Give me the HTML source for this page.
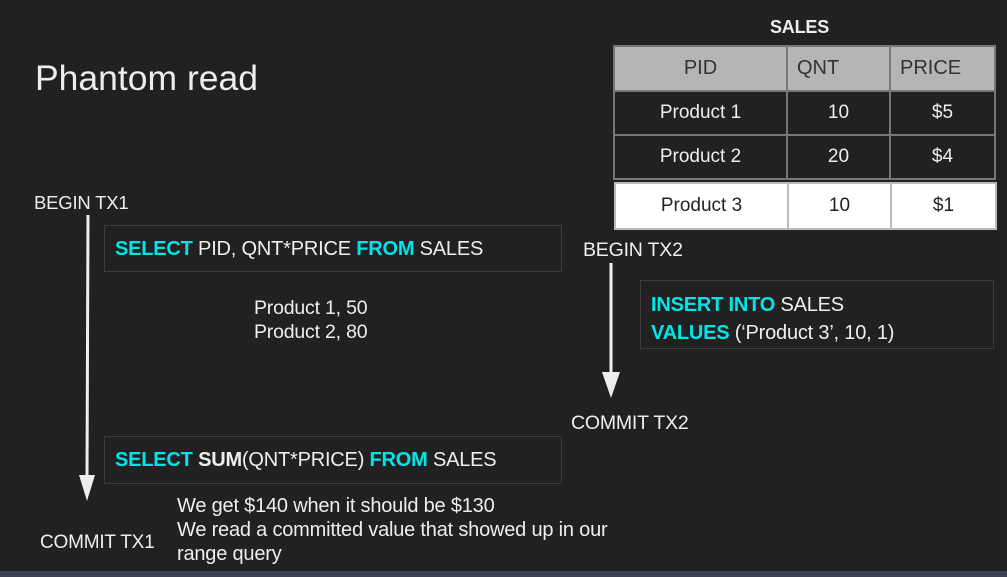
<!DOCTYPE html>
<html><head><style>
body{margin:0;width:1007px;height:577px;background:#212121;overflow:hidden;position:relative;font-family:"Liberation Sans",sans-serif;color:#eee}
.t{position:absolute;white-space:nowrap;font-size:20px;letter-spacing:-0.2px}
.c{color:#00e5e8;font-weight:bold}
.box{position:absolute;border:1px solid #3c3c3c}
table{position:absolute;border-collapse:collapse;font-size:19px;table-layout:fixed}
td{border:2px solid #777;text-align:center;padding:0}
</style></head><body>
<div class="t" style="left:35px;top:58px;font-size:35.5px;letter-spacing:0">Phantom read</div>
<div class="t" style="left:770px;top:17px;font-weight:bold;font-size:18px">SALES</div>
<table style="left:613px;top:45px;width:381px">
<colgroup><col style="width:173px"><col style="width:103px"><col style="width:105px"></colgroup>
<tr style="height:45px;background:#b5b5b5;color:#333;font-size:20px"><td>PID</td><td style="text-align:left;padding-left:9px">QNT</td><td style="text-align:left;padding-left:9px">PRICE</td></tr>
<tr style="height:44px"><td>Product 1</td><td>10</td><td>$5</td></tr>
<tr style="height:44px"><td>Product 2</td><td>20</td><td>$4</td></tr>
</table>
<table style="left:614px;top:182px;width:381px;background:#fff;color:#222">
<colgroup><col style="width:173px"><col style="width:103px"><col style="width:105px"></colgroup>
<tr style="height:46px"><td style="border-color:#bbb">Product 3</td><td style="border-color:#bbb">10</td><td style="border-color:#bbb">$1</td></tr>
</table>
<div class="t" style="left:34px;top:192px;font-size:18.5px">BEGIN TX1</div>
<div class="box" style="left:104px;top:225px;width:456px;height:45px"></div>
<div class="t" style="left:115px;top:238px"><span class="c">SELECT</span> PID, QNT*PRICE <span class="c">FROM</span> SALES</div>
<div class="t" style="left:254px;top:296px;line-height:24px;font-size:19.5px">Product 1, 50<br>Product 2, 80</div>
<div class="t" style="left:583px;top:239px;font-size:19.5px">BEGIN TX2</div>
<div class="box" style="left:640px;top:280px;width:352px;height:67px"></div>
<div class="t" style="left:651px;top:291px;line-height:28px;font-size:20px"><span class="c">INSERT INTO</span> SALES<br><span class="c">VALUES</span> (‘Product 3’, 10, 1)</div>
<div class="t" style="left:571px;top:412px;font-size:19.5px">COMMIT TX2</div>
<div class="box" style="left:104px;top:436px;width:456px;height:46px"></div>
<div class="t" style="left:115px;top:449px"><span class="c">SELECT</span> <b>SUM</b>(QNT*PRICE) <span class="c">FROM</span> SALES</div>
<div class="t" style="left:177px;top:494px;line-height:24px;font-size:20px">We get $140 when it should be $130<br>We read a committed value that showed up in our<br>range query</div>
<div class="t" style="left:40px;top:532px;font-size:19px">COMMIT TX1</div>
<svg style="position:absolute;left:0;top:0" width="1007" height="577">
<line x1="88" y1="215" x2="87" y2="478" stroke="#eee" stroke-width="3"/>
<polygon points="79,475 95,475 87,501" fill="#eee"/>
<line x1="611" y1="263" x2="611" y2="374" stroke="#eee" stroke-width="3"/>
<polygon points="602,372 620,372 611,398" fill="#eee"/>
<rect x="0" y="571" width="1007" height="6" fill="#3a4150"/>
</svg>
</body></html>
